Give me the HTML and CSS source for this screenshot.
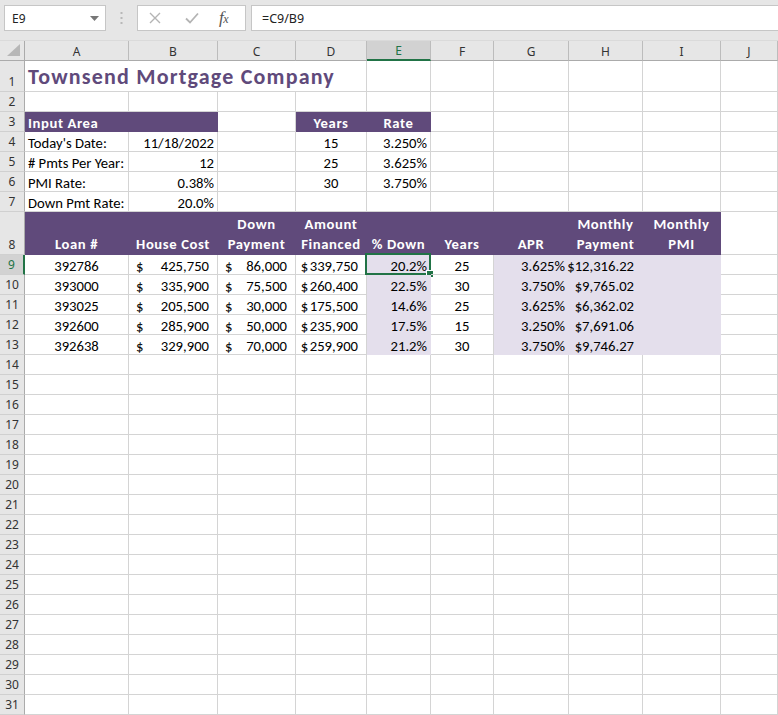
FILE: index.html
```html
<!DOCTYPE html>
<html>
<head>
<meta charset="utf-8">
<link rel="stylesheet" href="styles.css">
</head>
<body>
<div class="app">
  <div class="fbar">
    <div class="namebox"><span>E9</span><svg class="caret" width="9" height="5" viewBox="0 0 9 5"><polygon points="0,0 9,0 4.5,5" fill="#777"/></svg></div>
    <div class="dots"><svg width="3" height="12" viewBox="0 0 3 12"><rect x="0.5" y="0" width="2" height="2" fill="#b8b8b8"/><rect x="0.5" y="5" width="2" height="2" fill="#b8b8b8"/><rect x="0.5" y="10" width="2" height="2" fill="#b8b8b8"/></svg></div>
    <div class="fbtns">
      <svg class="ico" width="12" height="12" viewBox="0 0 12 12"><path d="M1 1 L11 11 M11 1 L1 11" stroke="#b4b4b4" stroke-width="1.4" fill="none"/></svg>
      <svg class="ico" width="14" height="12" viewBox="0 0 14 12"><path d="M1 6.5 L5 10.5 L13 1.5" stroke="#b4b4b4" stroke-width="1.8" fill="none"/></svg>
      <span class="fx">f<small>x</small></span>
    </div>
    <div class="finput">=C9/B9</div>
  </div>
  <div class="sheet">
    <!-- header -->
    <div class="corner"><svg width="14" height="13" viewBox="0 0 14 13"><polygon points="13,0 13,12 0,12" fill="#b7b7b7"/></svg></div>
    <div class="ch">A</div><div class="ch">B</div><div class="ch">C</div><div class="ch">D</div><div class="ch sel">E</div><div class="ch">F</div><div class="ch">G</div><div class="ch">H</div><div class="ch">I</div><div class="ch">J</div>
    <!-- row 1 -->
    <div class="rh">1</div><div class="c title">Townsend Mortgage Company</div><div class="c"></div><div class="c"></div><div class="c"></div><div class="c"></div><div class="c"></div><div class="c"></div>
    <!-- row 2 -->
    <div class="rh">2</div><div class="c"></div><div class="c"></div><div class="c"></div><div class="c"></div><div class="c"></div><div class="c"></div><div class="c"></div><div class="c"></div><div class="c"></div><div class="c"></div>
    <!-- row 3 -->
    <div class="rh">3</div><div class="c p span2">Input Area</div><div class="c"></div><div class="c p ctr">Years</div><div class="c p ctr">Rate</div><div class="c"></div><div class="c"></div><div class="c"></div><div class="c"></div><div class="c"></div>
    <!-- row 4 -->
    <div class="rh">4</div><div class="c">Today's Date:</div><div class="c r">11/18/2022</div><div class="c"></div><div class="c ctr">15</div><div class="c r">3.250%</div><div class="c"></div><div class="c"></div><div class="c"></div><div class="c"></div><div class="c"></div>
    <!-- row 5 -->
    <div class="rh">5</div><div class="c"># Pmts Per Year:</div><div class="c r">12</div><div class="c"></div><div class="c ctr">25</div><div class="c r">3.625%</div><div class="c"></div><div class="c"></div><div class="c"></div><div class="c"></div><div class="c"></div>
    <!-- row 6 -->
    <div class="rh">6</div><div class="c">PMI Rate:</div><div class="c r">0.38%</div><div class="c"></div><div class="c ctr">30</div><div class="c r">3.750%</div><div class="c"></div><div class="c"></div><div class="c"></div><div class="c"></div><div class="c"></div>
    <!-- row 7 -->
    <div class="rh">7</div><div class="c">Down Pmt Rate:</div><div class="c r">20.0%</div><div class="c"></div><div class="c"></div><div class="c"></div><div class="c"></div><div class="c"></div><div class="c"></div><div class="c"></div><div class="c"></div>
    <!-- row 8 -->
    <div class="rh">8</div>
    <div class="c p hd"><span>Loan #</span></div>
    <div class="c p hd"><span>House Cost</span></div>
    <div class="c p hd"><span>Down<br>Payment</span></div>
    <div class="c p hd"><span>Amount<br>Financed</span></div>
    <div class="c p hd"><span>% Down</span></div>
    <div class="c p hd"><span>Years</span></div>
    <div class="c p hd"><span>APR</span></div>
    <div class="c p hd"><span>Monthly<br>Payment</span></div>
    <div class="c p hd"><span>Monthly<br>PMI</span></div>
    <div class="c"></div>
    <!-- row 9 -->
    <div class="rh sel">9</div><div class="c ctr">392786</div><div class="c acct"><span>$</span><span>425,750</span></div><div class="c acct"><span>$</span><span>86,000</span></div><div class="c r pad8">$<span class="gap">339,750</span></div><div class="c r lp act">20.2%</div><div class="c ctr">25</div><div class="c r lp">3.625%</div><div class="c r lp pad8">$12,316.22</div><div class="c lp"></div><div class="c"></div>
    <!-- row 10 -->
    <div class="rh">10</div><div class="c ctr">393000</div><div class="c acct"><span>$</span><span>335,900</span></div><div class="c acct"><span>$</span><span>75,500</span></div><div class="c r pad8">$<span class="gap">260,400</span></div><div class="c r lp">22.5%</div><div class="c ctr">30</div><div class="c r lp">3.750%</div><div class="c r lp pad8">$9,765.02</div><div class="c lp"></div><div class="c"></div>
    <!-- row 11 -->
    <div class="rh">11</div><div class="c ctr">393025</div><div class="c acct"><span>$</span><span>205,500</span></div><div class="c acct"><span>$</span><span>30,000</span></div><div class="c r pad8">$<span class="gap">175,500</span></div><div class="c r lp">14.6%</div><div class="c ctr">25</div><div class="c r lp">3.625%</div><div class="c r lp pad8">$6,362.02</div><div class="c lp"></div><div class="c"></div>
    <!-- row 12 -->
    <div class="rh">12</div><div class="c ctr">392600</div><div class="c acct"><span>$</span><span>285,900</span></div><div class="c acct"><span>$</span><span>50,000</span></div><div class="c r pad8">$<span class="gap">235,900</span></div><div class="c r lp">17.5%</div><div class="c ctr">15</div><div class="c r lp">3.250%</div><div class="c r lp pad8">$7,691.06</div><div class="c lp"></div><div class="c"></div>
    <!-- row 13 -->
    <div class="rh">13</div><div class="c ctr">392638</div><div class="c acct"><span>$</span><span>329,900</span></div><div class="c acct"><span>$</span><span>70,000</span></div><div class="c r pad8">$<span class="gap">259,900</span></div><div class="c r lp">21.2%</div><div class="c ctr">30</div><div class="c r lp">3.750%</div><div class="c r lp pad8">$9,746.27</div><div class="c lp"></div><div class="c"></div>
    <!-- rows 14-31 -->
    <div class="rh">14</div><div class="c"></div><div class="c"></div><div class="c"></div><div class="c"></div><div class="c"></div><div class="c"></div><div class="c"></div><div class="c"></div><div class="c"></div><div class="c"></div>
    <div class="rh">15</div><div class="c"></div><div class="c"></div><div class="c"></div><div class="c"></div><div class="c"></div><div class="c"></div><div class="c"></div><div class="c"></div><div class="c"></div><div class="c"></div>
    <div class="rh">16</div><div class="c"></div><div class="c"></div><div class="c"></div><div class="c"></div><div class="c"></div><div class="c"></div><div class="c"></div><div class="c"></div><div class="c"></div><div class="c"></div>
    <div class="rh">17</div><div class="c"></div><div class="c"></div><div class="c"></div><div class="c"></div><div class="c"></div><div class="c"></div><div class="c"></div><div class="c"></div><div class="c"></div><div class="c"></div>
    <div class="rh">18</div><div class="c"></div><div class="c"></div><div class="c"></div><div class="c"></div><div class="c"></div><div class="c"></div><div class="c"></div><div class="c"></div><div class="c"></div><div class="c"></div>
    <div class="rh">19</div><div class="c"></div><div class="c"></div><div class="c"></div><div class="c"></div><div class="c"></div><div class="c"></div><div class="c"></div><div class="c"></div><div class="c"></div><div class="c"></div>
    <div class="rh">20</div><div class="c"></div><div class="c"></div><div class="c"></div><div class="c"></div><div class="c"></div><div class="c"></div><div class="c"></div><div class="c"></div><div class="c"></div><div class="c"></div>
    <div class="rh">21</div><div class="c"></div><div class="c"></div><div class="c"></div><div class="c"></div><div class="c"></div><div class="c"></div><div class="c"></div><div class="c"></div><div class="c"></div><div class="c"></div>
    <div class="rh">22</div><div class="c"></div><div class="c"></div><div class="c"></div><div class="c"></div><div class="c"></div><div class="c"></div><div class="c"></div><div class="c"></div><div class="c"></div><div class="c"></div>
    <div class="rh">23</div><div class="c"></div><div class="c"></div><div class="c"></div><div class="c"></div><div class="c"></div><div class="c"></div><div class="c"></div><div class="c"></div><div class="c"></div><div class="c"></div>
    <div class="rh">24</div><div class="c"></div><div class="c"></div><div class="c"></div><div class="c"></div><div class="c"></div><div class="c"></div><div class="c"></div><div class="c"></div><div class="c"></div><div class="c"></div>
    <div class="rh">25</div><div class="c"></div><div class="c"></div><div class="c"></div><div class="c"></div><div class="c"></div><div class="c"></div><div class="c"></div><div class="c"></div><div class="c"></div><div class="c"></div>
    <div class="rh">26</div><div class="c"></div><div class="c"></div><div class="c"></div><div class="c"></div><div class="c"></div><div class="c"></div><div class="c"></div><div class="c"></div><div class="c"></div><div class="c"></div>
    <div class="rh">27</div><div class="c"></div><div class="c"></div><div class="c"></div><div class="c"></div><div class="c"></div><div class="c"></div><div class="c"></div><div class="c"></div><div class="c"></div><div class="c"></div>
    <div class="rh">28</div><div class="c"></div><div class="c"></div><div class="c"></div><div class="c"></div><div class="c"></div><div class="c"></div><div class="c"></div><div class="c"></div><div class="c"></div><div class="c"></div>
    <div class="rh">29</div><div class="c"></div><div class="c"></div><div class="c"></div><div class="c"></div><div class="c"></div><div class="c"></div><div class="c"></div><div class="c"></div><div class="c"></div><div class="c"></div>
    <div class="rh">30</div><div class="c"></div><div class="c"></div><div class="c"></div><div class="c"></div><div class="c"></div><div class="c"></div><div class="c"></div><div class="c"></div><div class="c"></div><div class="c"></div>
    <div class="rh">31</div><div class="c"></div><div class="c"></div><div class="c"></div><div class="c"></div><div class="c"></div><div class="c"></div><div class="c"></div><div class="c"></div><div class="c"></div><div class="c"></div>
  </div>
</div>
</body>
</html>
```

FILE: styles.css
```css
* { box-sizing: border-box; }
html, body { margin: 0; padding: 0; }
body {
  background: #e6e6e6;
  width: 778px;
  height: 715px;
  overflow: hidden;
}
.app { width: 778px; }

/* formula bar */
.fbar {
  height: 41px;
  display: flex;
  align-items: flex-start;
  padding-top: 5px;
  padding-left: 4px;
  font-family: "Noto Sans", "DejaVu Sans", sans-serif;
  font-size: 12px;
  color: #222;
  border-bottom: 1px solid #dadada;
}
.namebox {
  width: 102px;
  height: 26px;
  background: #fff;
  border: 1px solid #c6c6c6;
  display: flex;
  align-items: center;
  justify-content: space-between;
  padding: 0 6px 0 7px;
}
.caret { margin-top: 1px; }
.dots {
  width: 31px;
  height: 26px;
  display: flex;
  align-items: center;
  justify-content: center;
}
.fbtns {
  width: 109px;
  height: 26px;
  background: #fff;
  border: 1px solid #c6c6c6;
  display: flex;
  align-items: center;
  padding-left: 11px;
}
.fbtns .ico:first-child { margin-right: 24px; }
.fbtns .ico:nth-child(2) { margin-right: 20px; }
.fx {
  font-family: "Liberation Serif", serif;
  font-style: italic;
  font-size: 17px;
  color: #555;
  letter-spacing: -0.5px;
  line-height: 16px;
}
.fx small { font-size: 12px; }
.finput {
  flex: 1;
  margin-left: 5px;
  height: 26px;
  background: #fff;
  border: 1px solid #c6c6c6;
  border-right: none;
  display: flex;
  align-items: center;
  padding-left: 10px;
  font-size: 12.5px;
}

/* sheet grid */
.sheet {
  display: grid;
  grid-template-columns: 25px 104px 89px 78px 71px 64px 63px 75px 74px 78px 1fr;
  grid-template-rows: 20px 31px 20px 20px 20px 20px 20px 20px 43px repeat(23, 20px);
  background: #fff;
  font-family: Carlito, Calibri, Lato, sans-serif;
  font-size: 14.67px;
  color: #000;
}
.corner {
  background: #e6e6e6;
  border-right: 1px solid #ababab;
  border-bottom: 1px solid #ababab;
  display: flex;
  align-items: flex-end;
  justify-content: flex-end;
  padding: 0 3px 3px 0;
}
.ch {
  background: #e6e6e6;
  border-right: 1px solid #bcbcbc;
  border-bottom: 1px solid #ababab;
  display: flex;
  align-items: center;
  justify-content: center;
  font-family: "Noto Sans", "DejaVu Sans", sans-serif;
  font-size: 12px;
  color: #333;
  padding-top: 1px;
}
.ch.sel {
  background: #d2d2d2;
  color: #217346;
  border-bottom: 2px solid #217346;
}
.rh {
  background: #e6e6e6;
  border-right: 1px solid #ababab;
  border-bottom: 1px solid #d0d0d0;
  display: flex;
  align-items: flex-end;
  justify-content: center;
  font-family: "Noto Sans", "DejaVu Sans", sans-serif;
  font-size: 12px;
  color: #333;
  padding-bottom: 1px;
  line-height: 16px;
}
.rh.sel {
  background: #d2d2d2;
  color: #217346;
  border-right: 2px solid #217346;
}

.c {
  border-right: 1px solid #d4d4d4;
  border-bottom: 1px solid #d4d4d4;
  display: flex;
  align-items: flex-end;
  padding: 0 3px 1px 3px;
  white-space: nowrap;
  line-height: 14px;
  position: relative;
}
.r { justify-content: flex-end; }
.ctr { justify-content: center; }
.pad8 { padding-right: 8px; }
.gap { margin-left: 1.5px; }
.acct { justify-content: space-between; padding-left: 7px; padding-right: 8px; }
.title {
  grid-column: span 4;
  font-size: 22px;
  font-weight: bold;
  color: #604a7b;
  line-height: 22px;
  padding-bottom: 3px;
  letter-spacing: 1.2px;
}
.span2 { grid-column: span 2; }
.p {
  background: #604a7b;
  border-color: #604a7b;
  color: #fff;
  font-weight: bold;
  letter-spacing: 0.6px;
}
.hd { justify-content: center; text-align: center; line-height: 20px; padding-bottom: 0; }
.lp {
  background: #e4dfec;
  border-color: #e4dfec;
}
.act::before {
  content: "";
  position: absolute;
  left: -2px;
  top: -2px;
  right: -1px;
  bottom: -1px;
  border: 2px solid #217346;
}
.act::after {
  content: "";
  position: absolute;
  right: -4px;
  bottom: -4px;
  width: 6px;
  height: 6px;
  background: #217346;
  border: 1px solid #fff;
}
```
